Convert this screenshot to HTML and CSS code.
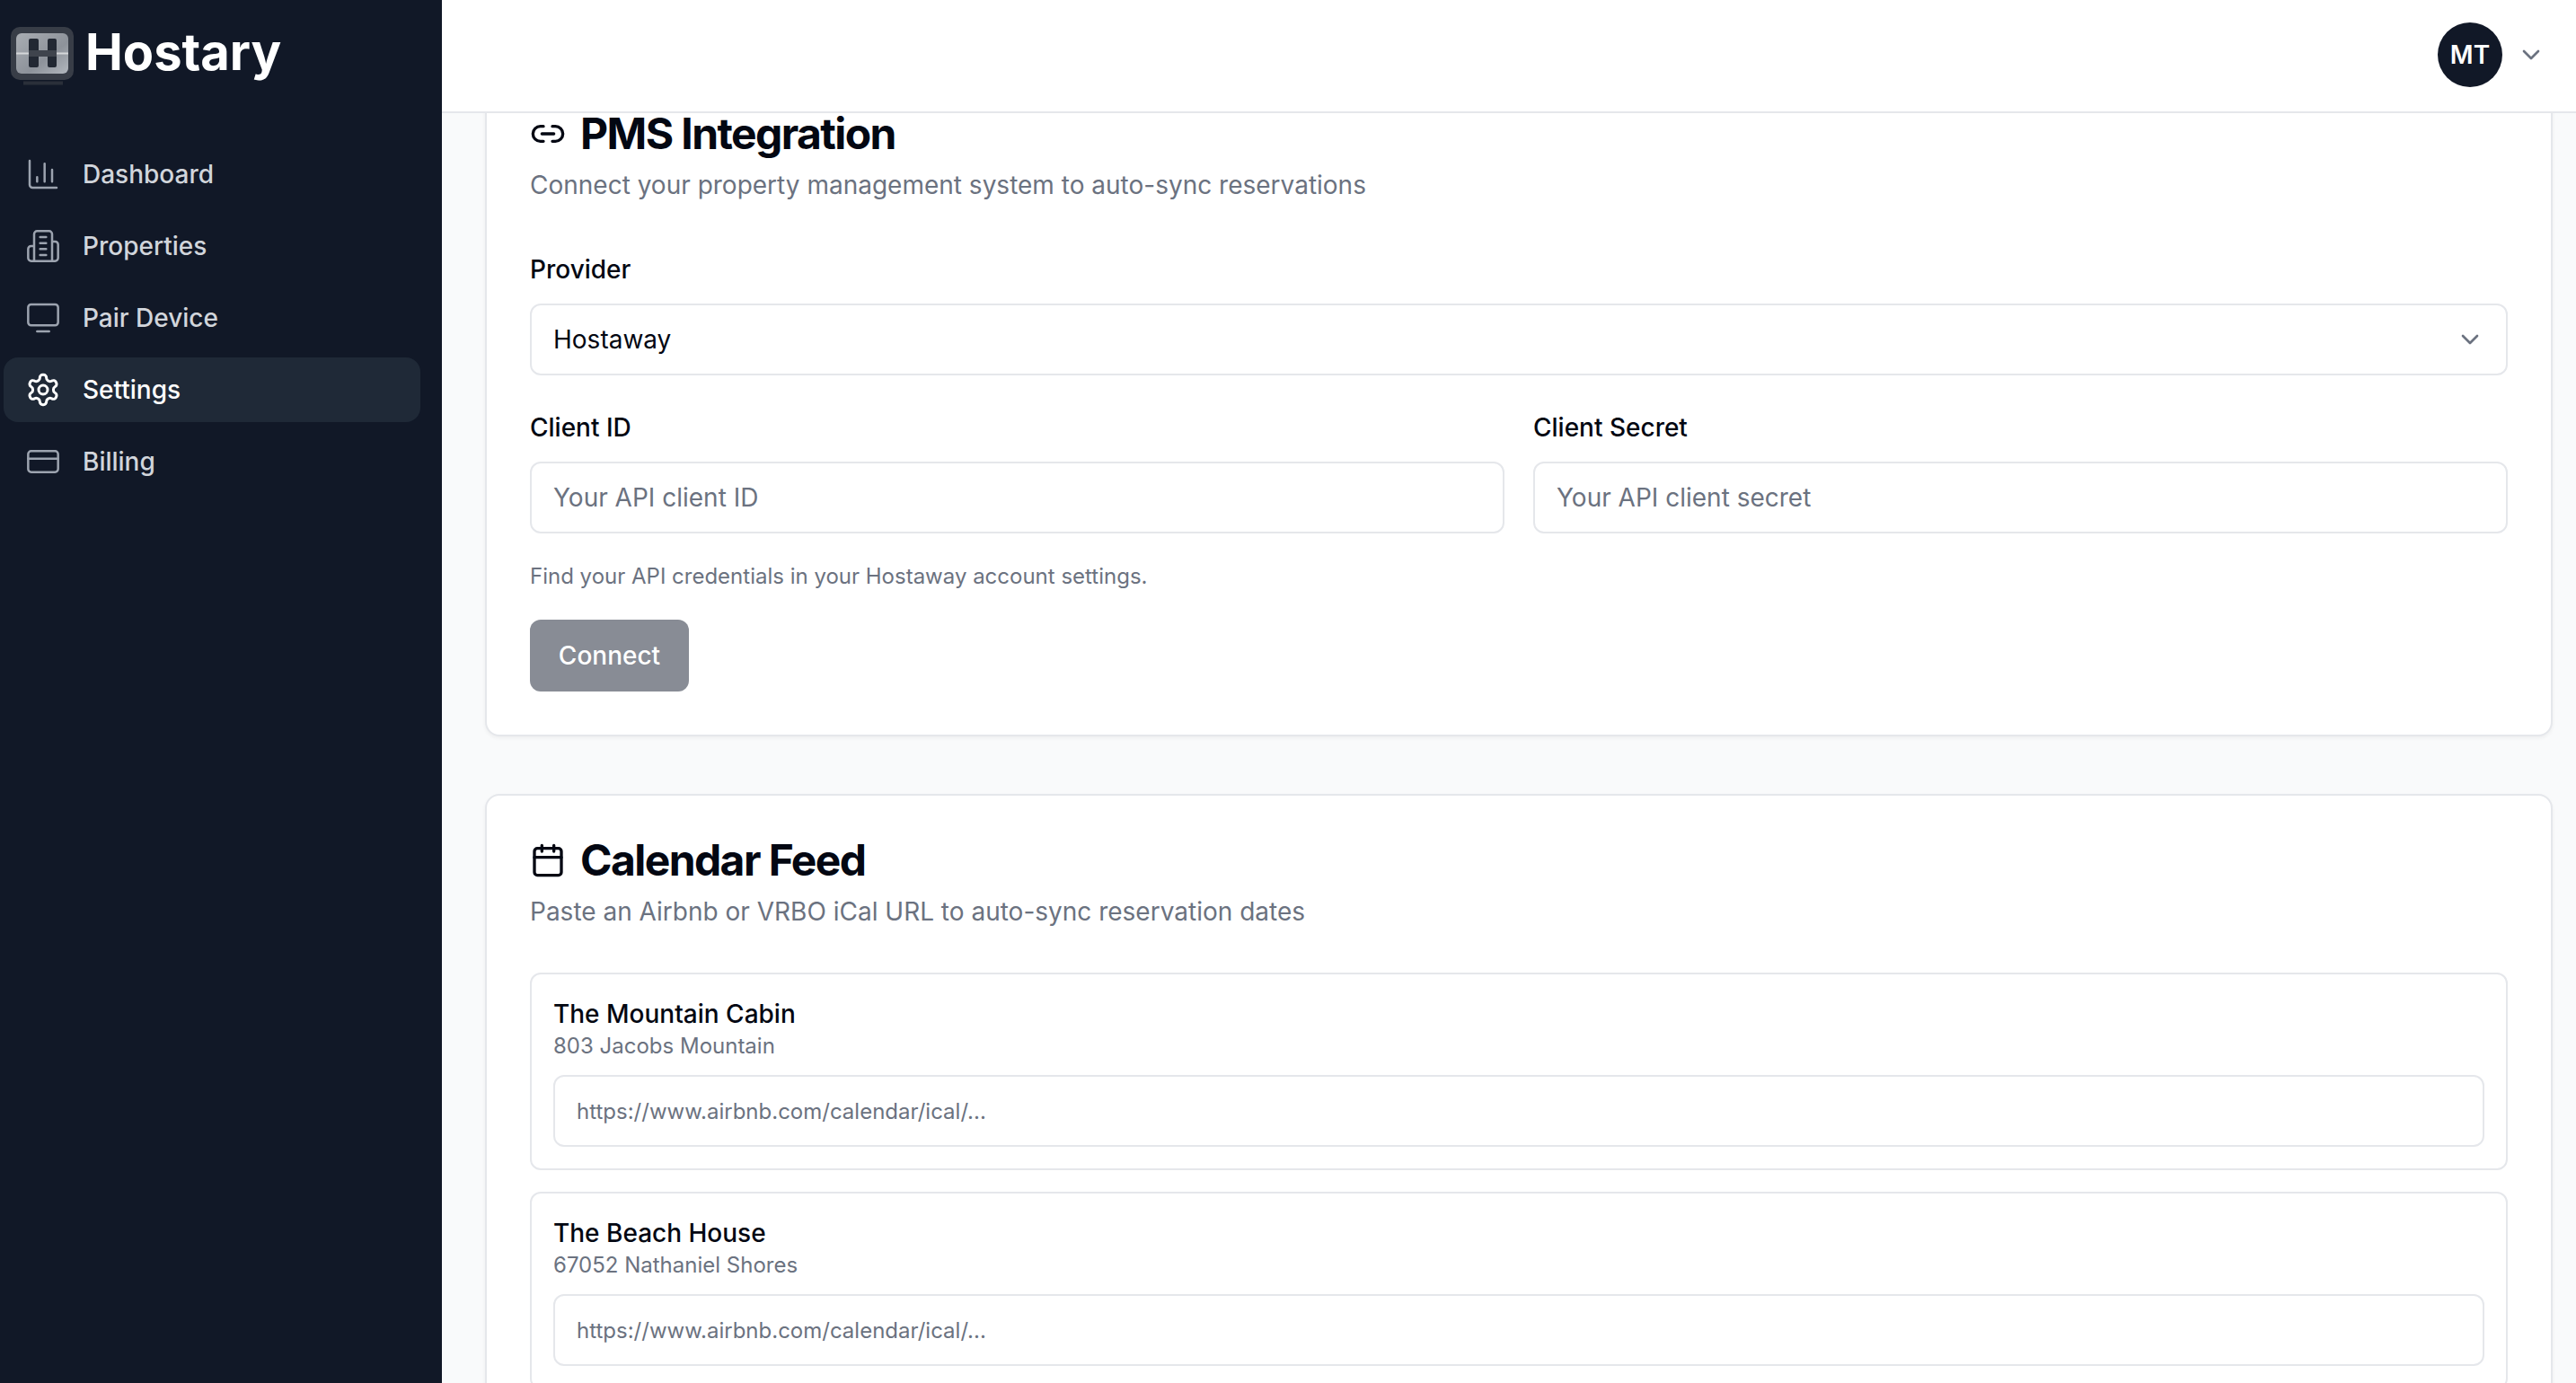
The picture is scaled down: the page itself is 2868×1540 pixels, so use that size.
FILE: index.html
```html
<!DOCTYPE html>
<html lang="en">
<head>
<meta charset="utf-8">
<title>Hostary Settings</title>
<link rel="stylesheet" href="styles.css">
</head>
<body>
<div class="app">
  <aside class="sidebar">
    <div class="brand">
      <svg class="logo" viewBox="0 0 70 66" aria-hidden="true">
        <defs>
          <linearGradient id="lg" x1="0" y1="0" x2="1" y2="1"><stop offset="0" stop-color="#a9adb3"/><stop offset="0.6" stop-color="#8d929a"/><stop offset="1" stop-color="#b2b7be"/></linearGradient>
        </defs>
        <rect x="0" y="0" width="70" height="59" rx="10" fill="#383d47"/>
        <path d="M14 62.500h44" stroke="#2a2f39" stroke-width="4"/>
        <rect x="6" y="7" width="58" height="45" rx="6" fill="url(#lg)"/>
        <rect x="20" y="13" width="11" height="32" rx="2" fill="#222833"/>
        <rect x="41" y="13" width="10" height="32" rx="2" fill="#222833"/>
        <rect x="20" y="26" width="31" height="7" fill="#3f444d"/>
        <path d="M6 29.500h14M51 29.500h13" stroke="#d5d7da" stroke-width="2"/>
      </svg>
      <span class="brand-name">Hostary</span>
    </div>
    <nav class="nav">
      <a class="nav-item">
        <svg class="nav-icon" viewBox="0 0 24 24"><path d="M3 3v16a2 2 0 0 0 2 2h16M8 17v-3M13 17V5M18 17V9"/></svg>
        <span>Dashboard</span>
      </a>
      <a class="nav-item">
        <svg class="nav-icon" viewBox="0 0 24 24"><path d="M6 22V4a2 2 0 0 1 2-2h8a2 2 0 0 1 2 2v18zM6 12H4a2 2 0 0 0-2 2v6a2 2 0 0 0 2 2h2M18 9h2a2 2 0 0 1 2 2v9a2 2 0 0 1-2 2h-2M10 6h4M10 10h4M10 14h4M10 18h4"/></svg>
        <span>Properties</span>
      </a>
      <a class="nav-item">
        <svg class="nav-icon" viewBox="0 0 24 24"><rect x="2" y="3" width="20" height="14" rx="2"/><path d="M8 21h8"/></svg>
        <span>Pair Device</span>
      </a>
      <a class="nav-item active">
        <svg class="nav-icon" viewBox="0 0 24 24"><path d="M12.220 2h-.44a2 2 0 0 0-2 2v.18a2 2 0 0 1-1 1.730l-.43.25a2 2 0 0 1-2 0l-.15-.08a2 2 0 0 0-2.730.73l-.22.38a2 2 0 0 0 .73 2.730l.15.1a2 2 0 0 1 1 1.720v.51a2 2 0 0 1-1 1.740l-.15.09a2 2 0 0 0-.73 2.730l.22.38a2 2 0 0 0 2.730.73l.15-.08a2 2 0 0 1 2 0l.43.25a2 2 0 0 1 1 1.730V20a2 2 0 0 0 2 2h.44a2 2 0 0 0 2-2v-.18a2 2 0 0 1 1-1.730l.43-.25a2 2 0 0 1 2 0l.15.08a2 2 0 0 0 2.730-.73l.22-.39a2 2 0 0 0-.73-2.730l-.15-.08a2 2 0 0 1-1-1.740v-.5a2 2 0 0 1 1-1.740l.15-.09a2 2 0 0 0 .73-2.730l-.22-.38a2 2 0 0 0-2.730-.73l-.15.08a2 2 0 0 1-2 0l-.43-.25a2 2 0 0 1-1-1.730V4a2 2 0 0 0-2-2z"/><circle cx="12" cy="12" r="3"/></svg>
        <span>Settings</span>
      </a>
      <a class="nav-item">
        <svg class="nav-icon" viewBox="0 0 24 24"><rect x="2" y="5" width="20" height="14" rx="2"/><path d="M2 10h20"/></svg>
        <span>Billing</span>
      </a>
    </nav>
  </aside>
  <div class="workspace">
    <header class="topbar">
      <div class="avatar">MT</div>
      <svg class="top-chevron" viewBox="0 0 24 24"><path d="m6 9 6 6 6-6"/></svg>
    </header>
    <main class="main">
      <div class="scroller">
        <section class="card">
          <h2 class="card-title">
            <svg class="title-icon" viewBox="0 0 24 24"><path d="M9 17H7A5 5 0 0 1 7 7h2M15 7h2a5 5 0 1 1 0 10h-2M8 12h8"/></svg>
            PMS Integration
          </h2>
          <p class="card-sub">Connect your property management system to auto-sync reservations</p>
          <div class="field provider">
            <label class="label">Provider</label>
            <div class="control select">
              <span>Hostaway</span>
              <svg class="select-chevron" viewBox="0 0 24 24"><path d="m6 9 6 6 6-6"/></svg>
            </div>
          </div>
          <div class="two-col">
            <div class="field">
              <label class="label">Client ID</label>
              <div class="control placeholder">Your API client ID</div>
            </div>
            <div class="field">
              <label class="label">Client Secret</label>
              <div class="control placeholder">Your API client secret</div>
            </div>
          </div>
          <p class="hint">Find your API credentials in your Hostaway account settings.</p>
          <button class="btn" type="button">Connect</button>
        </section>
        <section class="card">
          <h2 class="card-title">
            <svg class="title-icon" viewBox="0 0 24 24"><path d="M8 2v4M16 2v4M3 10h18"/><rect x="3" y="4" width="18" height="18" rx="2"/></svg>
            Calendar Feed
          </h2>
          <p class="card-sub">Paste an Airbnb or VRBO iCal URL to auto-sync reservation dates</p>
          <div class="feeds">
            <div class="feed">
              <div class="feed-name">The Mountain Cabin</div>
              <div class="feed-addr">803 Jacobs Mountain</div>
              <div class="control small placeholder">https://www.airbnb.com/calendar/ical/...</div>
            </div>
            <div class="feed">
              <div class="feed-name">The Beach House</div>
              <div class="feed-addr">67052 Nathaniel Shores</div>
              <div class="control small placeholder">https://www.airbnb.com/calendar/ical/...</div>
            </div>
          </div>
        </section>
      </div>
    </main>
  </div>
</div>
</body>
</html>
```
FILE: styles.css
```css
* { box-sizing: border-box; }
html, body { margin: 0; height: 100%; overflow: hidden; }
body { font-family: Inter, "Liberation Sans", sans-serif; color: #030712; background: #f9fafb; }
.app { display: flex; height: 1540px; }
.sidebar { width: 492px; flex: none; background: #111827; }
.brand { height: 124px; display: flex; align-items: flex-start; padding: 30px 0 0 12px; gap: 13px; }
.logo { width: 70px; height: 66px; flex: none; }
.brand-name { font-size: 56px; line-height: 56px; font-weight: 700; color: #fff; }
.nav { display: flex; flex-direction: column; gap: 8px; padding: 34px 24px 0 4px; }
.nav-item { height: 72px; display: flex; align-items: center; gap: 24px; padding-left: 24px; border-radius: 16px; font-size: 28px; font-weight: 500; color: #d1d5db; }
.nav-icon { width: 40px; height: 40px; flex: none; fill: none; stroke: #9ca3af; stroke-width: 1.5; stroke-linecap: round; stroke-linejoin: round; }
.nav-item.active { background: #1f2937; color: #fff; }
.nav-item.active .nav-icon { stroke: #fff; stroke-width: 1.8; }
.workspace { flex: 1; min-width: 0; display: flex; flex-direction: column; }
.topbar { height: 126px; flex: none; background: #fff; border-bottom: 2px solid #e5e7eb; display: flex; align-items: center; justify-content: flex-end; padding: 0 34px 2px 0; gap: 16px; }
.avatar { width: 72px; height: 72px; border-radius: 50%; background: #111827; color: #fff; font-size: 28px; font-weight: 600; display: flex; align-items: center; justify-content: center; }
.top-chevron { width: 32px; height: 32px; fill: none; stroke: #6b7280; stroke-width: 2; stroke-linecap: round; stroke-linejoin: round; }
.main { flex: 1; min-height: 0; overflow: hidden; padding: 0 26px 0 48px; }
.scroller { margin-top: -51px; display: flex; flex-direction: column; gap: 64px; }
.card { background: #fff; border: 2px solid #e5e7eb; border-radius: 16px; padding: 48px 48px 48px; box-shadow: 0 2px 4px rgba(0,0,0,.05); }
.card-title { margin: 1px 0; display: flex; align-items: center; gap: 16px; font-size: 48px; line-height: 46px; font-weight: 700; letter-spacing: -0.033em; color: #030712; }
.title-icon { width: 40px; height: 40px; flex: none; fill: none; stroke: #030712; stroke-width: 2; stroke-linecap: round; stroke-linejoin: round; }
.card-sub { margin: 14px 0 0; font-size: 28px; line-height: 40px; color: #6b7280; }
.field { display: flex; flex-direction: column; gap: 18px; }
.provider { margin-top: 54px; }
.label { font-size: 28px; line-height: 40px; font-weight: 500; color: #030712; }
.control { height: 80px; border: 2px solid #e5e7eb; border-radius: 12px; background: #fff; display: flex; align-items: center; padding: 0 24px; font-size: 28px; color: #030712; }
.select { justify-content: space-between; }
.select-chevron { width: 32px; height: 32px; fill: none; stroke: #6b7280; stroke-width: 2; stroke-linecap: round; stroke-linejoin: round; }
.placeholder { color: #6b7280; }
.two-col { margin-top: 38px; display: grid; grid-template-columns: 1fr 1fr; gap: 32px; }
.hint { margin: 28px 0 0; font-size: 24px; line-height: 40px; color: #6b7280; }
.btn { margin-top: 28px; display: block; width: 177px; height: 80px; border: 0; border-radius: 12px; background: #888c95; color: #fff; font: 500 28px Inter, "Liberation Sans", sans-serif; }
.feeds { margin-top: 48px; display: flex; flex-direction: column; gap: 24px; }
.feed { border: 2px solid #e5e7eb; border-radius: 12px; padding: 24px; }
.feed-name { font-size: 28px; line-height: 40px; font-weight: 500; color: #030712; }
.feed-addr { font-size: 24px; line-height: 32px; color: #6b7280; margin-bottom: 16px; }
.small { font-size: 24px; }
```
